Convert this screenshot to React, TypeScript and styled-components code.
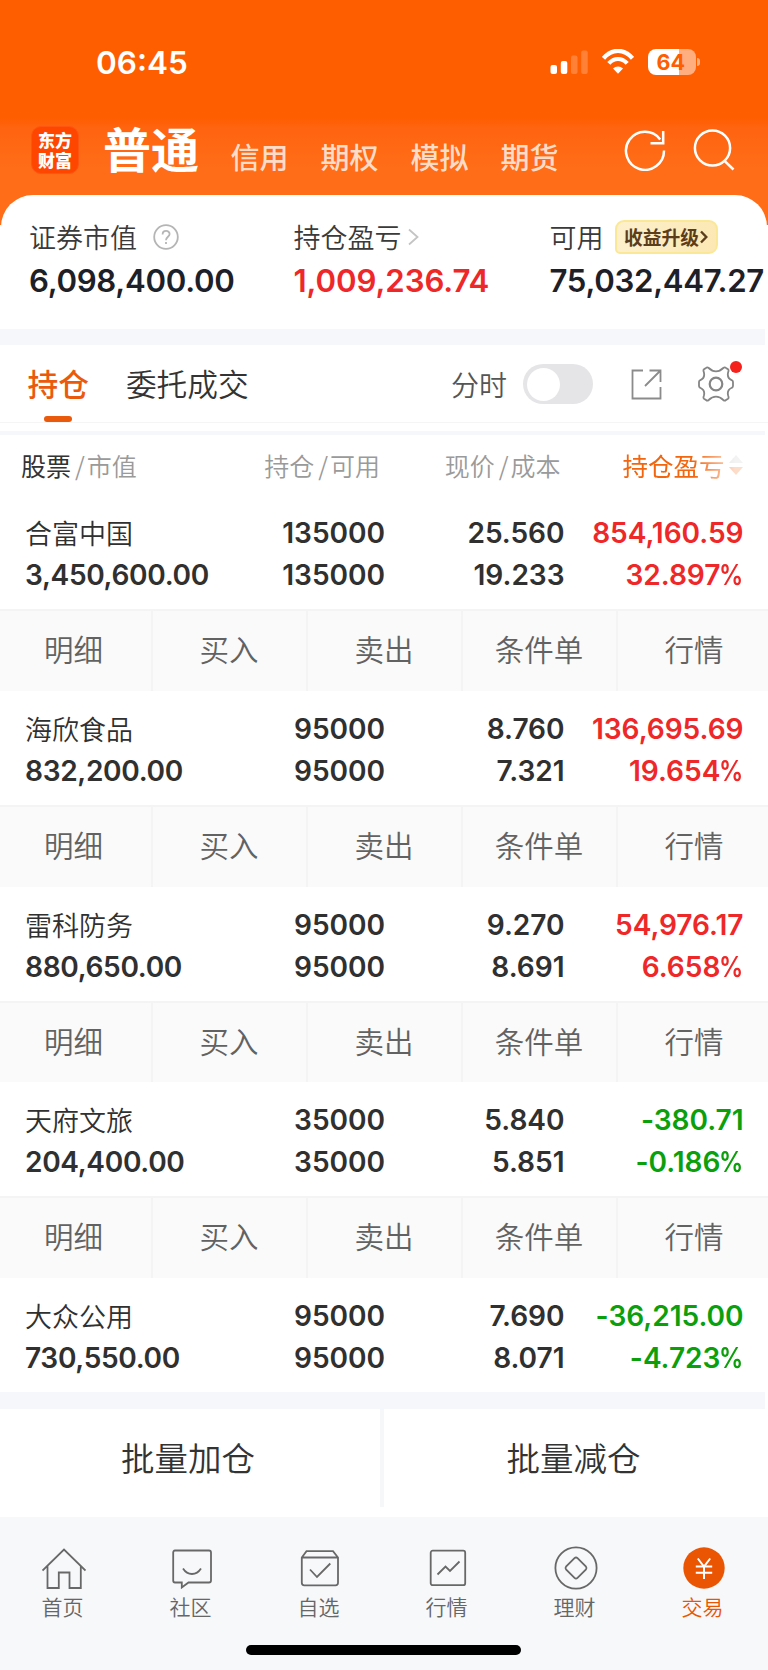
import React from "react";
import styled, { createGlobalStyle } from "styled-components";

const cjk = `"Noto Sans CJK SC", sans-serif`;
const latin = `Inter, "Noto Sans CJK SC", sans-serif`;

const GlobalStyle = createGlobalStyle`
  * { box-sizing: border-box; }
  body { margin: 0; background: #fff; font-family: ${cjk}; font-weight: 350; color: #303030; }
  svg { display: block; }
`;

const Screen = styled.div`
  width: 768px;
  height: 1670px;
  overflow: hidden;
  display: flex;
  flex-direction: column;
  background: #fff;
`;

const Header = styled.header`
  height: 225px;
  flex: none;
  background: linear-gradient(#ff5e00 0, #ff5e00 118px, #ff6410 128px, #ff6d18 168px, #ff6d18 100%);
`;

const StatusBar = styled.div`
  height: 122px;
  padding: 49px 68px 0 96px;
  display: flex;
  justify-content: space-between;
  align-items: flex-start;
`;

const Clock = styled.div`
  font: 600 31.5px/28px ${latin};
  color: #fff;
`;

const StatusIcons = styled.div`
  display: flex;
  gap: 14px;
`;

const TitleBar = styled.div`
  height: 72px;
  padding-left: 31px;
  padding-right: 33.5px;
  display: flex;
  align-items: flex-start;
`;

const Logo = styled.div`
  width: 48px;
  height: 48px;
  margin-top: 4px;
  border-radius: 10px;
  background: #ff4600;
  border: 1px solid #ff5510;
  color: #fff;
  display: flex;
  flex-direction: column;
  align-items: center;
  padding-top: 3px;
  font: 900 17px/20px ${cjk};
`;

const ActiveAccount = styled.div`
  margin-left: 24px;
  margin-top: -3.5px;
  width: 127.5px;
  font: 700 48px/56px ${cjk};
  color: #fff;
`;

const Account = styled.div`
  width: 90px;
  margin-top: 14px;
  font: 500 29px/40px ${cjk};
  color: #ffdcc8;
`;

const HeaderTools = styled.div`
  margin-left: auto;
  margin-top: 6px;
  display: flex;
  gap: 26.5px;
`;

const Summary = styled.section`
  height: 134.5px;
  margin: -30.5px 1px 0;
  flex: none;
  border-radius: 32px 32px 0 0;
  background: #fff;
  display: flex;
  padding: 22.5px 0 0 28px;
`;

const SummaryItem = styled.div<{ $w: number }>`
  width: ${(p) => p.$w}px;
  flex: none;
`;

const SummaryLabel = styled.div`
  height: 40px;
  display: flex;
  align-items: center;
  font-size: 27px;
  line-height: 40px;
  color: #3a3a3a;
  white-space: nowrap;
`;

const SummaryValue = styled.div<{ $red?: boolean }>`
  margin-top: 5.5px;
  font: 600 31.2px/36px ${latin};
  letter-spacing: ${(p) => (p.$red ? -0.1 : -0.3)}px;
  color: ${(p) => (p.$red ? "#ee2828" : "#1d2127")};
  white-space: nowrap;
`;

const Badge = styled.span`
  margin-left: 11px;
  width: 103px;
  height: 34px;
  border-radius: 9px 9px 9px 5px;
  border: 2px solid #fbe896;
  background: linear-gradient(100deg, #fdf0cc, #fbe8b4);
  color: #5b3d1c;
  display: flex;
  align-items: center;
  justify-content: center;
  gap: 1px;
  font: 700 18.8px/30px ${cjk};
`;

const Band = styled.div<{ $h: number }>`
  height: ${(p) => p.$h}px;
  margin-right: 3px;
  flex: none;
  background: #f5f7fa;
`;

const Tabs = styled.nav`
  height: 78px;
  flex: none;
  display: flex;
  padding: 0 33px 0 27.5px;
  border-bottom: 1px solid #f5f5f6;
`;

const Tab = styled.div<{ $active?: boolean }>`
  display: flex;
  flex-direction: column;
  align-items: center;
  justify-content: space-between;
  margin-right: 37px;
  padding-top: 16px;
  font-size: 30.7px;
  line-height: 44px;
  font-weight: ${(p) => (p.$active ? 500 : 350)};
  color: ${(p) => (p.$active ? "#ea5a0c" : "#333")};
  &::after {
    content: "";
    width: 28px;
    height: 6px;
    border-radius: 3px;
    background: ${(p) => (p.$active ? "#ea5a0c" : "transparent")};
  }
`;

const TabTools = styled.div`
  margin-left: auto;
  height: 78px;
  display: flex;
  align-items: center;
`;

const ChartLabel = styled.span`
  font-size: 28px;
  line-height: 40px;
  color: #555;
`;

const Toggle = styled.div`
  width: 70px;
  height: 40px;
  margin: 0 38px 0 16px;
  border-radius: 20px;
  background: #e5e5e7;
  padding: 3.5px;
  &::after {
    content: "";
    display: block;
    width: 33px;
    height: 33px;
    border-radius: 50%;
    background: #fff;
  }
`;

const Settings = styled.div`
  position: relative;
  margin-left: 36px;
  margin-right: 1px;
`;

const Dot = styled.i`
  position: absolute;
  right: -8px;
  top: -5px;
  width: 12px;
  height: 12px;
  border-radius: 50%;
  background: #f5211d;
`;

const ScrollGap = styled.div`
  height: 8px;
  flex: none;
`;

const columns = "200px 185px 179.5px 179px";

const TableHead = styled.div`
  height: 60px;
  flex: none;
  display: grid;
  grid-template-columns: ${columns};
  align-items: start;
  padding-top: 12px;
  font-size: 25px;
  line-height: 36px;
  color: #9a9a9a;
`;

const HeadCell = styled.div<{ $first?: boolean; $end?: number }>`
  text-align: ${(p) => (p.$first ? "left" : "right")};
  padding-left: ${(p) => (p.$first ? 21 : 0)}px;
  padding-right: ${(p) => p.$end ?? 0}px;
  white-space: nowrap;
  b { font-weight: 400; color: #333; }
  i { font-style: normal; margin: 0 2px 0 4px; }
`;

const SortCell = styled.div`
  display: flex;
  justify-content: flex-end;
  align-items: center;
  gap: 3px;
  font-size: 25.5px;
  font-weight: 400;
  color: #f2660f;
  mask-image: linear-gradient(90deg, #000 128px, rgba(0, 0, 0, 0.22) 170px);
`;

const Row = styled.div`
  height: 114px;
  flex: none;
  display: grid;
  grid-template-columns: ${columns};
  grid-template-rows: 42px 42px;
  padding-top: 17px;
`;

const StockName = styled.div`
  padding-left: 25px;
  font-size: 27px;
  line-height: 42px;
  color: #303030;
  white-space: nowrap;
`;

const Num = styled.div<{ $left?: boolean; $tone?: "up" | "down" }>`
  text-align: ${(p) => (p.$left ? "left" : "right")};
  padding-left: ${(p) => (p.$left ? 25 : 0)}px;
  font: 600 28.1px/42px ${latin};
  letter-spacing: ${(p) => (p.$left ? -0.35 : -0.05)}px;
  white-space: nowrap;
  color: ${(p) => (p.$tone === "up" ? "#ee2828" : p.$tone === "down" ? "#0c9f0c" : "#303030")};
`;

const Percent = styled.span`
  display: inline-block;
  margin-left: -5px;
  transform: scaleX(0.86);
  transform-origin: right;
`;

const Actions = styled.div`
  height: 81.8px;
  flex: none;
  margin: 0 -3px 0 -4px;
  display: grid;
  grid-template-columns: repeat(5, 1fr);
  background: #fafafa;
  border-top: 2px solid #f4f4f4;
`;

const Action = styled.div`
  text-align: center;
  font-size: 29.5px;
  line-height: 74px;
  color: #626262;
  & + & { border-left: 2px solid #f4f4f5; padding-right: 1px; }
`;

const Batch = styled.div`
  height: 107.5px;
  flex: none;
  display: flex;
  padding-bottom: 10px;
`;

const BatchButton = styled.div<{ $w: number }>`
  width: ${(p) => p.$w}px;
  padding-right: 4px;
  text-align: center;
  font-size: 33.5px;
  line-height: 95px;
  color: #333;
  & + & { border-left: 4px solid #f6f7f9; padding-right: 5px; }
`;

const NavBar = styled.nav`
  height: 153px;
  flex: none;
  background: #f7f8fa;
  display: flex;
  flex-direction: column;
  align-items: center;
`;

const NavItems = styled.div`
  width: 100%;
  height: 128px;
  display: grid;
  grid-template-columns: repeat(6, 1fr);
`;

const NavItem = styled.div<{ $active?: boolean }>`
  display: flex;
  flex-direction: column;
  align-items: center;
  padding-top: 29.5px;
  padding-right: 1px;
  font-size: 21px;
  line-height: 30px;
  color: ${(p) => (p.$active ? "#ea5504" : "#666")};
  span { margin-top: 1px; margin-right: 2px; }
`;

const HomeIndicator = styled.div`
  width: 275px;
  height: 10px;
  margin-right: 1px;
  border-radius: 5px;
  background: #000;
`;

const Signal = () => (
  <svg width="38" height="26" fill="#fff">
    <rect x="0.5" y="16" width="6.5" height="9" rx="2" />
    <rect x="10.8" y="12" width="6.5" height="13" rx="2" />
    <rect x="21" y="6.5" width="6.5" height="18.5" rx="2" opacity=".22" />
    <rect x="31.2" y="1.5" width="6.5" height="23.5" rx="2" opacity=".22" />
  </svg>
);

const Wifi = () => (
  <svg width="32" height="26" viewBox="0 0 32 26" fill="none" stroke="#fff">
    <path d="M1.5 9.3C10 -.7 22 -.7 30.5 9.3" strokeWidth="4.2" />
    <path d="M6.8 14.4C12 8.5 20 8.5 25.2 14.4" strokeWidth="4.2" />
    <path d="M16 24.8 11 19.5C13.5 16.8 18.5 16.8 21 19.5Z" fill="#fff" stroke="none" />
  </svg>
);

const BatteryIcon = styled.div`
  display: flex;
  align-items: center;
`;

const BatteryBody = styled.div`
  width: 48px;
  height: 26px;
  border-radius: 8px;
  background: linear-gradient(90deg, #fff 31px, #ffae80 31px);
  font: 700 21.5px/27px ${latin};
  color: #ff5e00;
  padding-left: 9px;
`;

const BatteryTip = styled.div`
  width: 3px;
  height: 8px;
  margin-left: 1.5px;
  border-radius: 0 4px 4px 0;
  background: #ffae80;
`;

const RefreshIcon = () => (
  <svg width="42" height="43" fill="none" stroke="#fff" strokeWidth="2.5">
    <path d="M40 22.6A19 19 0 1 1 36.2 11.4" />
    <path d="M39.2 3V15.3H26.5" />
  </svg>
);

const SearchIcon = () => (
  <svg width="42" height="43" fill="none" stroke="#fff" strokeWidth="2.5">
    <circle cx="19.5" cy="20" r="17.6" />
    <path d="M31.5 32.8 40.5 41.5" />
  </svg>
);

const HelpIcon = styled.svg`margin-left: 15.5px;`;
const ChevronIcon = styled.svg`margin-left: 6px;`;

const ShareIcon = () => (
  <svg width="31" height="31" fill="none" stroke="#8b8b8b" strokeWidth="1.8">
    <path d="M12 1.5H1.5V29.5H29.5V18M18.5 1.5H29.5V13M29.5 1.5 14 17" />
  </svg>
);

const GearIcon = () => (
  <svg width="36" height="36" viewBox="0 0 36 36" fill="none" stroke="#858585" strokeWidth="1.8" strokeLinejoin="round">
    <path d="M8 1.9Q9.3.8 10.7 2 Q14 5.3 18 5.3T25.3 2Q26.7.8 28 1.9L30 3.3Q31 4 30.2 6C29 10.5 30.5 13 34 14.3Q35 14.8 35 16V20Q35 21.3 33.8 21.8C30 23.5 29 26 30.3 30Q31 32 30 32.7L28 34Q26.7 35.2 25.3 34Q22 30.7 18 30.7T10.7 34Q9.3 35.2 8 34L6 32.7Q5 32 5.8 30C7 26 6 23.5 2.2 21.8Q1 21.3 1 20V16Q1 14.8 2 14.3C5.5 13 7 10.5 5.8 6Q5 4 6 3.3Z" />
    <circle cx="18" cy="18" r="6.3" strokeWidth="2.2" />
  </svg>
);

const icons: Record<string, React.ReactNode> = {
  首页: <path d="M.5 24.5 22 3.5 43.5 24.5M5.5 20V42H16.8V26.5H27.5V42H38.8V20" />,
  社区: (
    <>
      <path d="M5 4.5H39Q41 4.5 41 6.5V34.5Q41 36.5 39 36.5H18.5L11.8 41.5V36.5H5Q3.2 36.5 3.2 34.5V6.5Q3.2 4.5 5 4.5Z" />
      <path d="M13 22.5Q16.5 28 22 28T31 22.5" />
    </>
  ),
  自选: (
    <>
      <path d="M3.8 11.5 8.5 5.2H35L40 11.5V36.8Q40 39.3 37.5 39.3H6.3Q3.8 39.3 3.8 36.8ZM4 11.5H40" />
      <path d="M12 23.5 19 31 32.3 17.5" />
    </>
  ),
  行情: (
    <>
      <rect x="4.7" y="4.7" width="34.5" height="34.5" rx="2" />
      <path d="M11.5 28.5 19.5 20.5 24 25 33.5 15.5" />
    </>
  ),
  理财: (
    <>
      <circle cx="22" cy="22" r="20.6" />
      <path d="M20.5 12.2Q22 10.8 23.5 12.2L32 20.7Q33 22 32 23.3L23.5 31.8Q22 33.2 20.5 31.8L12 23.3Q11 22 12 20.7Z" />
    </>
  ),
  交易: (
    <>
      <circle cx="22" cy="22" r="20.7" fill="#ea5504" stroke="none" />
      <path stroke="#fff" strokeWidth="2" d="M15.8 12.5 22 20.5 28.2 12.5M13.8 20.5H30.2M13.8 26.7H30.2M22 20.5V33" />
    </>
  ),
};

const stocks = [
  ["合富中国", "3,450,600.00", "135000", "25.560", "19.233", "854,160.59", "32.897"],
  ["海欣食品", "832,200.00", "95000", "8.760", "7.321", "136,695.69", "19.654"],
  ["雷科防务", "880,650.00", "95000", "9.270", "8.691", "54,976.17", "6.658"],
  ["天府文旅", "204,400.00", "35000", "5.840", "5.851", "-380.71", "-0.186"],
  ["大众公用", "730,550.00", "95000", "7.690", "8.071", "-36,215.00", "-4.723"],
];

export default function App() {
  return (
    <Screen>
      <GlobalStyle />
      <Header>
        <StatusBar>
          <Clock>06:45</Clock>
          <StatusIcons>
            <Signal />
            <Wifi />
            <BatteryIcon>
              <BatteryBody>64</BatteryBody>
              <BatteryTip />
            </BatteryIcon>
          </StatusIcons>
        </StatusBar>
        <TitleBar>
          <Logo>
            <span>东方</span>
            <span>财富</span>
          </Logo>
          <ActiveAccount>普通</ActiveAccount>
          {["信用", "期权", "模拟", "期货"].map((name) => (
            <Account key={name}>{name}</Account>
          ))}
          <HeaderTools>
            <RefreshIcon />
            <SearchIcon />
          </HeaderTools>
        </TitleBar>
      </Header>

      <Summary>
        <SummaryItem $w={264.5}>
          <SummaryLabel>
            证券市值
            <HelpIcon width="26" height="26" fill="none" stroke="#b5b5b5" strokeWidth="1.8">
              <circle cx="13" cy="13" r="11.8" />
              <path d="M9.6 10.4C9.6 5.8 16.6 6 16.6 10C16.6 12.8 13 12.8 13 16.3M13 18V20" />
            </HelpIcon>
          </SummaryLabel>
          <SummaryValue>6,098,400.00</SummaryValue>
        </SummaryItem>
        <SummaryItem $w={256}>
          <SummaryLabel>
            持仓盈亏
            <ChevronIcon width="11" height="18" fill="none" stroke="#c4c4c4" strokeWidth="1.8">
              <path d="M1 1.5 9.5 9 1 16.5" />
            </ChevronIcon>
          </SummaryLabel>
          <SummaryValue $red>1,009,236.74</SummaryValue>
        </SummaryItem>
        <SummaryItem $w={217}>
          <SummaryLabel>
            可用
            <Badge>
              收益升级
              <svg width="8" height="14" fill="none" stroke="#5b3d1c" strokeWidth="2.4">
                <path d="M1 1.5 6.3 7 1 12.5" />
              </svg>
            </Badge>
          </SummaryLabel>
          <SummaryValue>75,032,447.27</SummaryValue>
        </SummaryItem>
      </Summary>

      <Band $h={16} />
      <Tabs>
        <Tab $active>持仓</Tab>
        <Tab>委托成交</Tab>
        <TabTools>
          <ChartLabel>分时</ChartLabel>
          <Toggle />
          <ShareIcon />
          <Settings>
            <GearIcon />
            <Dot />
          </Settings>
        </TabTools>
      </Tabs>
      <ScrollGap />
      <Band $h={4} />

      <TableHead>
        <HeadCell $first><b>股票</b><i>/</i>市值</HeadCell>
        <HeadCell $end={5}>持仓<i>/</i>可用</HeadCell>
        <HeadCell $end={4}>现价<i>/</i>成本</HeadCell>
        <SortCell>
          持仓盈亏
          <svg width="16" height="22" viewBox="0 0 16 22">
            <path d="M1 9 8 1 15 9Z" fill="#c8c8c8" />
            <path d="M1 13 8 21 15 13Z" fill="#f2660f" />
          </svg>
        </SortCell>
      </TableHead>

      {stocks.map(([name, value, qty, price, cost, profit, rate], i) => {
        const tone = profit.startsWith("-") ? "down" : "up";
        return (
          <React.Fragment key={name}>
            <Row>
              <StockName>{name}</StockName>
              <Num>{qty}</Num>
              <Num>{price}</Num>
              <Num $tone={tone}>{profit}</Num>
              <Num $left>{value}</Num>
              <Num>{qty}</Num>
              <Num>{cost}</Num>
              <Num $tone={tone}>{rate}<Percent>%</Percent></Num>
            </Row>
            {i < stocks.length - 1 && (
              <Actions>
                {["明细", "买入", "卖出", "条件单", "行情"].map((a) => (
                  <Action key={a}>{a}</Action>
                ))}
              </Actions>
            )}
          </React.Fragment>
        );
      })}

      <Band $h={17.3} />
      <Batch>
        <BatchButton $w={380}>批量加仓</BatchButton>
        <BatchButton $w={388}>批量减仓</BatchButton>
      </Batch>

      <NavBar>
        <NavItems>
          {Object.entries(icons).map(([label, icon]) => (
            <NavItem key={label} $active={label === "交易"}>
              <svg width="44" height="44" viewBox="0 0 44 44" fill="none" stroke="#686868" strokeWidth="1.8">
                {icon}
              </svg>
              <span>{label}</span>
            </NavItem>
          ))}
        </NavItems>
        <HomeIndicator />
      </NavBar>
    </Screen>
  );
}
